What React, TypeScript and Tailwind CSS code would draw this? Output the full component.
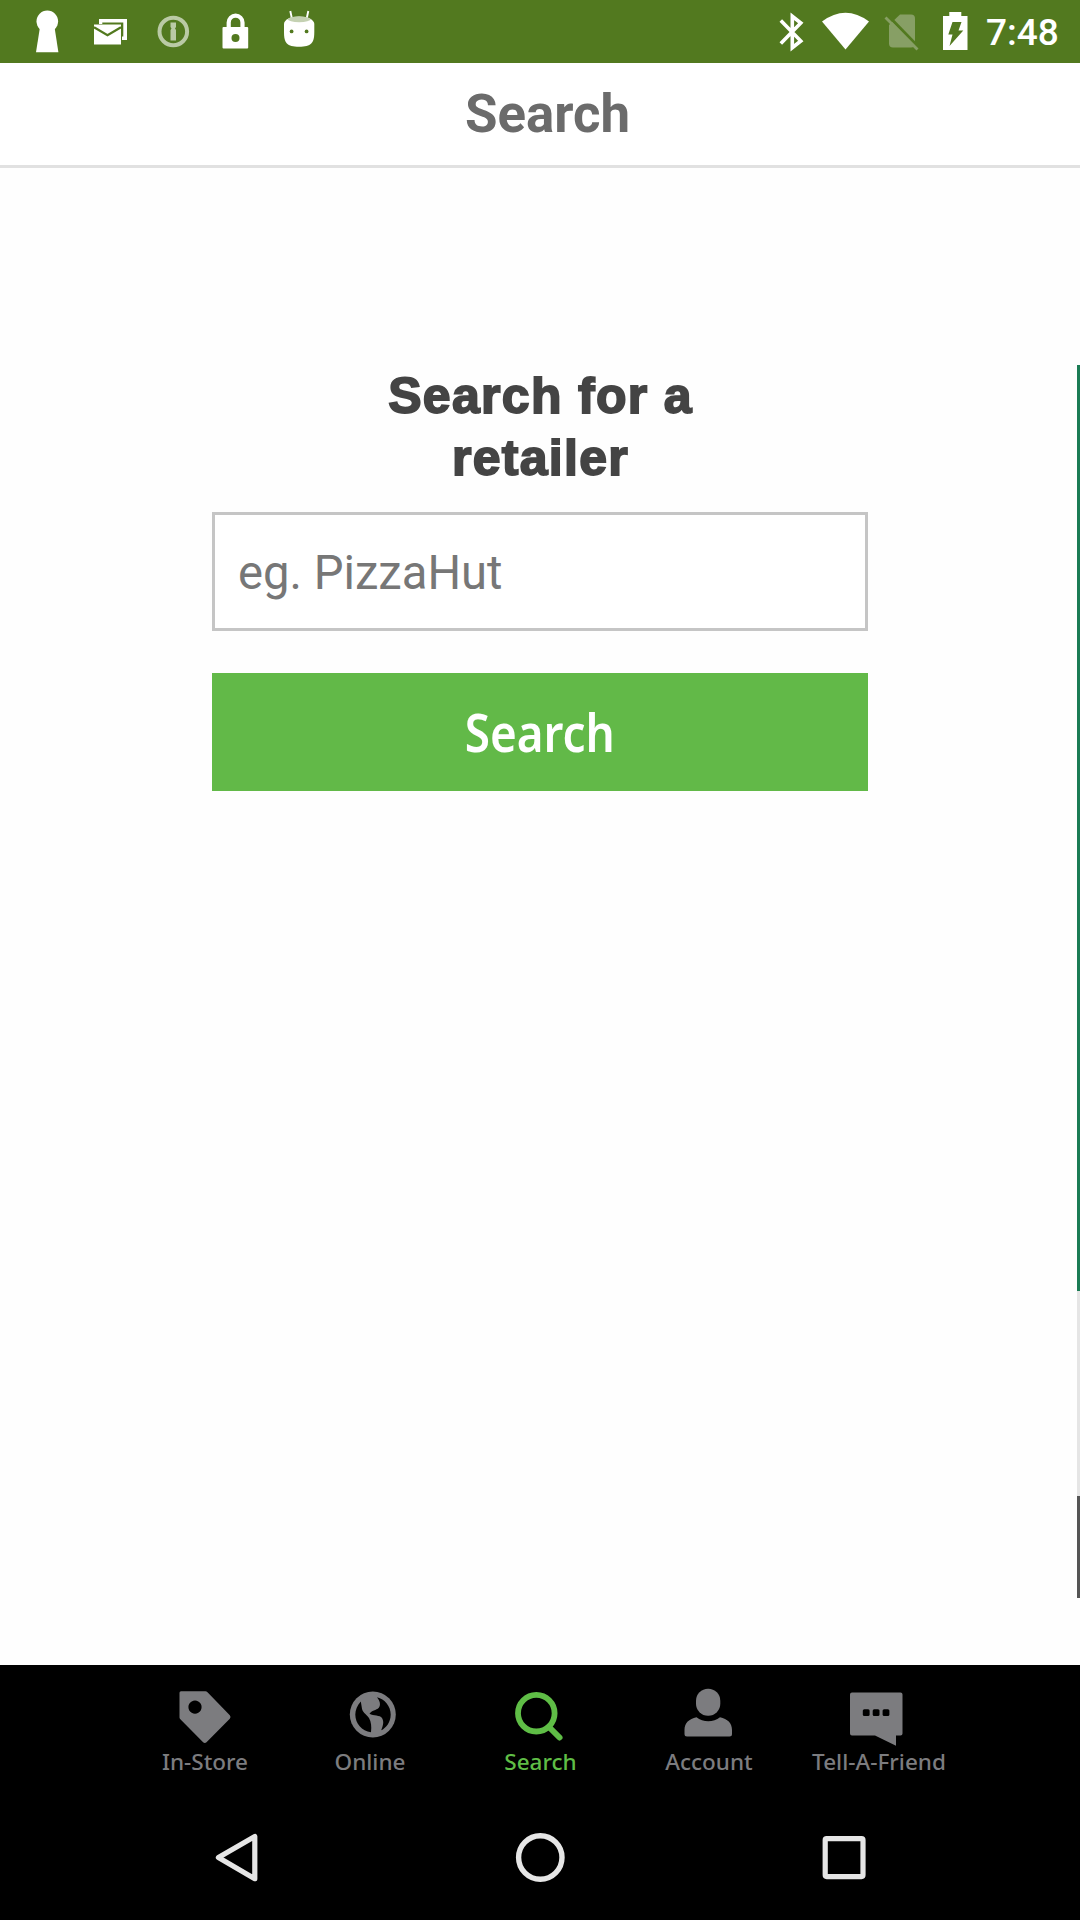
import type { ReactNode } from "react";

type IconProps = { x: number; y: number; w: number; h: number; className?: string; children: ReactNode };

function Icon({ x, y, w, h, className = "", children }: IconProps) {
  return (
    <svg width={w} height={h} viewBox={`${x} ${y} ${w} ${h}`} className={`block shrink-0 ${className}`} fill="currentColor">
      {children}
    </svg>
  );
}

function StatusBar() {
  return (
    <div className="flex h-[63px] items-start justify-between bg-[#52791f] pl-[30px] pr-[22px] text-white">
      <div className="flex">
        <Icon x={30} y={0} w={52} h={63}>
          <circle cx="47.3" cy="21.3" r="10.8" />
          <path d="M40 27h14.5l3.9 25.3H36z" />
        </Icon>
        <Icon x={82} y={0} w={64} h={63}>
          <path d="M99 19h28v21h-5v-3.500h1.300V22.500h-21V24H99z" />
          <path d="M94 24.500h27v20H94z" />
          <path d="M94 27.200l13.500 8 13.500-8" fill="none" stroke="#52791f" strokeWidth="2.200" />
        </Icon>
        <Icon x={146} y={0} w={60} h={63} className="text-[#bacaa5]">
          <circle cx="173.300" cy="31.500" r="13.800" fill="none" stroke="currentColor" strokeWidth="4" />
          <path d="M170.500 22.500h5.500v4.500l-1 1.500 1 1.500v10.500h-5.500V30l1-1.500-1-1.500z" />
        </Icon>
        <Icon x={206} y={0} w={60} h={63}>
          <path d="M228.700 28v-5.500a6.900 6.900 0 0 1 13.800 0V28" fill="none" stroke="currentColor" strokeWidth="4.200" />
          <rect x="222.500" y="27" width="25.700" height="21.500" rx="1" />
          <circle cx="235.500" cy="38" r="4" fill="#52791f" />
        </Icon>
        <Icon x={266} y={0} w={64} h={63}>
          <path d="M290.300 11l1.700 8M308.300 11l-1.700 8" stroke="currentColor" strokeWidth="1.900" />
          <path d="M284 24c0-4 6-7.500 15-7.500s15.300 3.500 15.300 7.500v8c0 11-3 14.700-15.300 14.700S284 43 284 32z" />
          <ellipse cx="299.200" cy="19.300" rx="11.500" ry="2.900" fill="#c4d1b2" />
          <circle cx="291.600" cy="31.400" r="1.900" fill="#52791f" />
          <circle cx="306.600" cy="31.400" r="1.900" fill="#52791f" />
        </Icon>
      </div>
      <div className="flex">
        <Icon x={774} y={0} w={42} h={63}>
          <path d="M780.800 20.500l20 20.500-8.500 6.700V16.300l8.500 6.700-20 20.500" fill="none" stroke="currentColor" strokeWidth="3.600" />
        </Icon>
        <Icon x={816} y={0} w={64} h={63}>
          <path d="M822 21.500q23.500-17.500 47 0L845.500 49.500z" />
        </Icon>
        <Icon x={880} y={0} w={54} h={63}>
          <path d="M900 14.500h11q4 0 4 4v25q0 4-4 4h-18q-4 0-4-4V25z" fill="#879f65" />
          <path d="M887 14.500l32 33" stroke="#52791f" strokeWidth="3" />
          <path d="M885.500 17.500l32 32" stroke="#879f65" strokeWidth="2.800" />
        </Icon>
        <Icon x={934} y={0} w={52} h={63}>
          <path d="M943 16h6.300v-4h12v4h6.200v34H943z" />
          <path d="M952.500 22h9l-3 8.500h4.800L949.500 46l3-11.500h-4.200z" fill="#52791f" />
        </Icon>
        <div className="w-[72px] whitespace-nowrap pt-[11px] font-['Roboto'] text-[37px] font-medium leading-[44px]">7:48</div>
      </div>
    </div>
  );
}

type Tab = { label: string; labelClass: string; color: string; start: number; icon: ReactNode };

const tabs: Tab[] = [
  {
    label: "In-Store", labelClass: "", color: "text-[#7c7c7f]", start: 121,
    icon: (
      <path fillRule="evenodd" d="M181 1691.300h24.500q1 0 2 1l22.300 23q1.500 1.700 0 3.400l-23.300 23.600q-1.700 1.500-3.400 0l-22.500-22.800q-1.100-1-1.100-2v-24.700q0-1.500 1.500-1.500zM195 1700.500a6.600 6.600 0 1 0 .01 0z" />
    ),
  },
  {
    label: "Online", labelClass: "-ml-[6px]", color: "text-[#7c7c7f]", start: 289,
    icon: (
      <>
        <circle cx="372.800" cy="1714.500" r="23" />
        <path d="M360.800 1701.500c-3.500 4-5.500 8.500-5.500 13 0 9 6.500 16.500 15.700 17.800.7-6 .2-10.300-2-14.300-3-4-7-6-7.200-10.500z" fill="#000" />
        <path d="M377 1697.200c7.800 1.800 13.700 9 13.700 17.200 0 8-5 13.800-9.500 15.800 2-5 3-8.500.8-12.200-2-3-8.500-2-12.500-4.200 2-3.300 6.800-3.300 9.300-6 2.200-3 1.200-6.800-1.800-10.600z" fill="#000" />
      </>
    ),
  },
  {
    label: "Search", labelClass: "-ml-[1px]", color: "text-[#5fbd46]", start: 457,
    icon: (
      <>
        <circle cx="536.300" cy="1713.200" r="18.300" fill="none" stroke="currentColor" strokeWidth="5.800" />
        <path d="M549 1727l10.500 10.500" stroke="currentColor" strokeWidth="6" strokeLinecap="round" />
      </>
    ),
  },
  {
    label: "Account", labelClass: "", color: "text-[#7c7c7f]", start: 625,
    icon: (
      <>
        <rect x="696" y="1688.700" width="24.300" height="27" rx="12" />
        <path d="M684.500 1734v-4c0-7 4.500-11 12-12.700 6.500 5.300 17 5.300 23.500 0 7.500 1.700 12 5.700 12 12.700v4q0 2.500-2.500 2.500H687q-2.500 0-2.500-2.500z" />
      </>
    ),
  },
  {
    label: "Tell-A-Friend", labelClass: "ml-[4px]", color: "text-[#7c7c7f]", start: 793,
    icon: (
      <>
        <path d="M852 1692.500h48.500q2 0 2 2v39q0 2-2 2H896v10.300L875 1735.500h-23q-2 0-2-2v-39q0-2 2-2z" />
        <rect x="862.800" y="1709.300" width="6.800" height="6.800" rx="1.500" fill="#000" />
        <rect x="872.700" y="1709.300" width="6.800" height="6.800" rx="1.500" fill="#000" />
        <rect x="882.600" y="1709.300" width="6.800" height="6.800" rx="1.500" fill="#000" />
      </>
    ),
  },
];

function TabBar() {
  return (
    <nav className="flex h-[135px] pl-[121px]">
      {tabs.map((t) => (
        <div key={t.label} className={`flex w-[168px] shrink-0 flex-col items-center ${t.color}`}>
          <Icon x={t.start} y={1665} w={168} h={82}>{t.icon}</Icon>
          <span className={`whitespace-nowrap font-['Noto_Sans'] text-[22.5px] font-medium leading-[30px] ${t.labelClass}`}>{t.label}</span>
        </div>
      ))}
    </nav>
  );
}

function SystemNav() {
  return (
    <div className="flex h-[114px] items-center justify-between pl-[206px] pr-[206px] text-[#e6e6e6]">
      <Icon x={206} y={1827} w={60} h={60}>
        <path d="M254.800 1836.500v42.200l-36.400-21.100z" fill="none" stroke="currentColor" strokeWidth="5.200" strokeLinejoin="round" />
      </Icon>
      <Icon x={510} y={1827} w={60} h={60}>
        <circle cx="540.300" cy="1857.500" r="21.700" fill="none" stroke="currentColor" strokeWidth="5.400" />
      </Icon>
      <Icon x={814} y={1827} w={60} h={60}>
        <rect x="825.200" y="1838.600" width="37.800" height="38" rx="1.500" fill="none" stroke="currentColor" strokeWidth="5.200" />
      </Icon>
    </div>
  );
}

export default function App() {
  return (
    <div className="flex h-[1920px] w-[1080px] flex-col overflow-hidden bg-white">
      <StatusBar />
      <header className="flex h-[105px] items-start justify-center border-b-[3px] border-[#e1e1e1] pl-[15px] pt-[21px]">
        <h1 className="font-['Roboto'] text-[52.8px] font-bold leading-[61px] text-[#6b6b6b]">Search</h1>
      </header>
      <main className="flex h-[1497px] justify-end bg-[#fefefe]">
        <form className="mr-[209px] flex w-[656px] flex-col pt-[197px]" onSubmit={(e) => e.preventDefault()}>
          <h2 className="h-[147px] pl-[1px] text-center font-['Liberation_Sans'] text-[50px] font-bold leading-[62px] tracking-[1.3px] text-[#444] [-webkit-text-stroke:1.8px_#444]">
            Search for a<br />retailer
          </h2>
          <input
            type="text"
            placeholder="eg. PizzaHut"
            className="h-[119px] w-full border-[3px] border-[#c5c5c5] bg-white px-[23px] pt-[2px] font-['Roboto'] text-[47.2px] outline-none placeholder:text-[#777]"
          />
          <button className="mt-[42px] flex h-[118px] items-center justify-center bg-[#62b948] font-['Noto_Sans'] text-[53px] font-semibold text-white">
            <span className="-ml-[1px] scale-x-[0.865]">Search</span>
          </button>
        </form>
        <div className="flex w-[3px] flex-col pt-[197px]">
          <div className="h-[926px] bg-[#1b7c55]" />
          <div className="h-[205px] bg-[#e5e5e5]" />
          <div className="h-[102px] bg-[#555]" />
        </div>
      </main>
      <footer className="h-[255px] bg-black">
        <TabBar />
        <SystemNav />
      </footer>
    </div>
  );
}
